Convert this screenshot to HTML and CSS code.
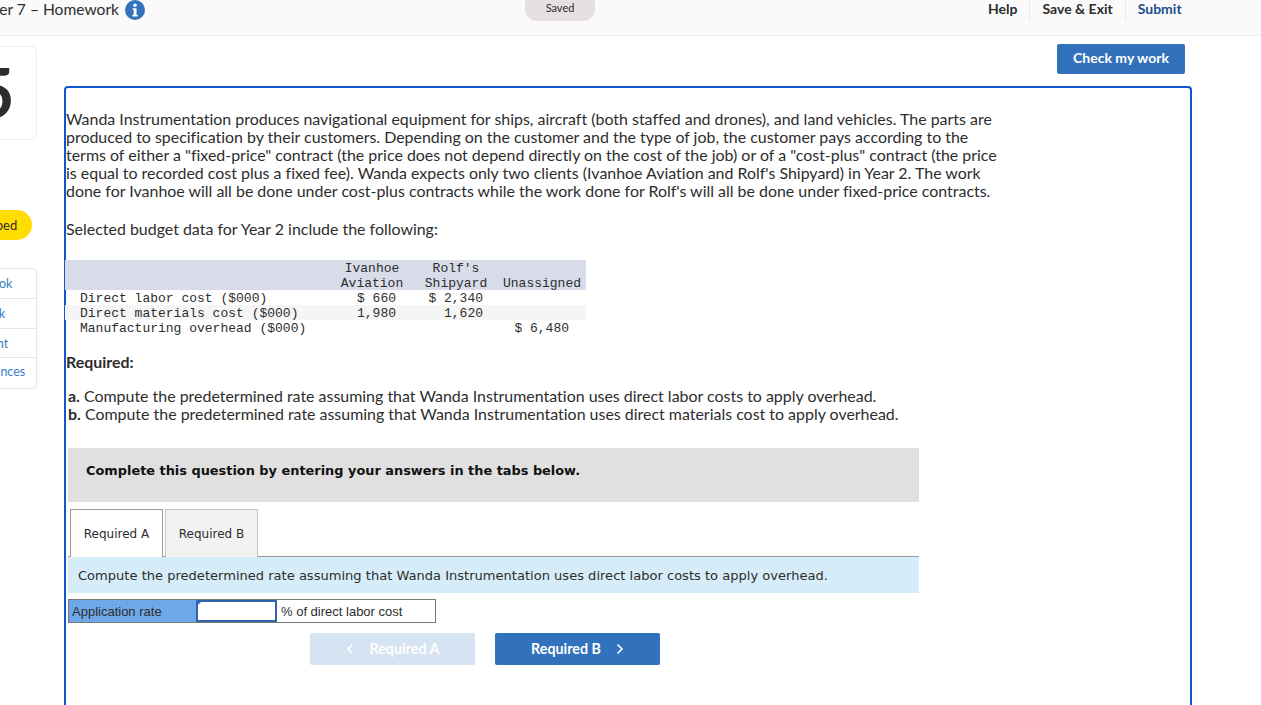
FILE: index.html
```html
<!DOCTYPE html>
<html lang="en">
<head>
<meta charset="utf-8">
<title>Chapter 7 – Homework</title>
<link rel="stylesheet" href="styles.css">
</head>
<body>
<div class="page">
  <header class="topbar">
    <div class="title-wrap">
      <span class="title">Chapter 7 – Homework</span>
      <svg class="info" width="20" height="20" viewBox="0 0 20 20"><circle cx="10" cy="10" r="10" fill="#3272bc"/><circle cx="10" cy="5.2" r="1.8" fill="#fff"/><path d="M7.6 8.2h3.9v6.6h1.2v1.6H7.4v-1.6h1.3v-5H7.6z" fill="#fff"/></svg>
    </div>
    <div class="saved">Saved</div>
    <nav class="actions">
      <a class="action">Help</a>
      <a class="action">Save &amp; Exit</a>
      <a class="action submit">Submit</a>
    </nav>
  </header>
  <div class="main">
    <aside class="side">
      <div class="qnum">5</div>
      <div class="skipped">Skipped</div>
      <ul class="links">
        <li>eBook</li>
        <li>Ask</li>
        <li>Print</li>
        <li>References</li>
      </ul>
    </aside>
    <div class="content">
      <div class="check-row"><button class="check">Check my work</button></div>
      <section class="question">
        <p class="para">Wanda Instrumentation produces navigational equipment for ships, aircraft (both staffed and drones), and land vehicles. The parts are<br>produced to specification by their customers. Depending on the customer and the type of job, the customer pays according to the<br>terms of either a "fixed-price" contract (the price does not depend directly on the cost of the job) or of a "cost-plus" contract (the price<br>is equal to recorded cost plus a fixed fee). Wanda expects only two clients (Ivanhoe Aviation and Rolf's Shipyard) in Year 2. The work<br>done for Ivanhoe will all be done under cost-plus contracts while the work done for Rolf's will all be done under fixed-price contracts.</p>
        <p class="para selected">Selected budget data for Year 2 include the following:</p>
        <table class="budget">
          <thead>
            <tr><th></th><th><span class="hd">Ivanhoe<br>Aviation</span></th><th><span class="hd">Rolf's<br>Shipyard</span></th><th><span class="hd">Unassigned</span></th></tr>
          </thead>
          <tbody>
            <tr><td>Direct labor cost ($000)</td><td>$ 660</td><td>$ 2,340</td><td></td></tr>
            <tr class="alt"><td>Direct materials cost ($000)</td><td>1,980</td><td>1,620</td><td></td></tr>
            <tr><td>Manufacturing overhead ($000)</td><td></td><td></td><td>$ 6,480</td></tr>
          </tbody>
        </table>
        <p class="para required">Required:</p>
        <ol class="parts">
          <li><b>a.</b> Compute the predetermined rate assuming that Wanda Instrumentation uses direct labor costs to apply overhead.</li>
          <li><b>b.</b> Compute the predetermined rate assuming that Wanda Instrumentation uses direct materials cost to apply overhead.</li>
        </ol>
        <div class="notice">Complete this question by entering your answers in the tabs below.</div>
        <div class="tabs">
          <div class="tab active">Required A</div>
          <div class="tab">Required B</div>
        </div>
        <div class="prompt">Compute the predetermined rate assuming that Wanda Instrumentation uses direct labor costs to apply overhead.</div>
        <div class="answer">
          <div class="answer-label">Application rate</div>
          <div class="answer-input"><input type="text" aria-label="Application rate"></div>
          <div class="answer-unit">% of direct labor cost</div>
        </div>
        <div class="nav">
          <button class="navbtn off"><svg width="8" height="12" viewBox="0 0 8 12"><path d="M6.5 1.5 2 6l4.5 4.5" fill="none" stroke="#fff" stroke-width="1.6"/></svg>Required A</button>
          <button class="navbtn"><span>Required B</span><svg width="8" height="12" viewBox="0 0 8 12"><path d="M1.5 1.5 6 6l-4.5 4.5" fill="none" stroke="#fff" stroke-width="1.6"/></svg></button>
        </div>
      </section>
    </div>
  </div>
</div>
</body>
</html>
```
FILE: styles.css
```css
html, body {
  margin: 0;
  height: 705px;
  overflow: hidden;
  background: #fff;
}
body {
  font-family: "Lato", "Liberation Sans", sans-serif;
  color: #2d2d2d;
  font-variant-ligatures: none;
}
.page {
  margin-left: -60px;
  width: 1321px;
}
.topbar {
  height: 35px;
  border-bottom: 1px solid #eeeeee;
  background: #fafafa;
  display: flex;
  align-items: flex-start;
}
.title-wrap {
  width: 575px;
  display: flex;
  justify-content: flex-end;
  padding-right: 380px;
  box-sizing: content-box;
  margin-left: -370px;
  align-items: center;
  height: 19px;
  gap: 6px;
}
.title {
  font-size: 15.6px;
  white-space: nowrap;
  padding-bottom: 2px;
}
.info { flex: none; }
.saved {
  width: 70px;
  height: 21px;
  background: #e6e0e3;
  border-radius: 0 0 12px 12px;
  font-size: 11px;
  line-height: 16px;
  text-align: center;
}
.actions {
  display: flex;
  margin-left: 381px;
}
.action {
  font-size: 14px;
  font-weight: 700;
  height: 20px;
  line-height: 18px;
  padding: 0 12px;
  border-right: 1px solid #e8e8e8;
}
.action.submit {
  border-right: 0;
  color: #1c4f8c;
}
.main {
  display: flex;
  gap: 27px;
}
.side {
  width: 97px;
  padding-top: 10px;
  display: flex;
  flex-direction: column;
  align-items: flex-end;
}
.qnum {
  width: 84px;
  height: 94px;
  box-sizing: border-box;
  border: 1px solid #eeeeee;
  border-radius: 5px;
  font-size: 68px;
  font-weight: 700;
  line-height: 90px;
  text-align: center;
}
.skipped {
  margin-top: 70px;
  margin-right: 5px;
  width: 75px;
  height: 30px;
  border-radius: 15px;
  background: #ffdd00;
  font-size: 13px;
  line-height: 30px;
  text-align: center;
}
.links {
  list-style: none;
  margin: 28px 0 0;
  padding: 0;
  width: 84px;
  border: 1px solid #e6e6e6;
  border-radius: 4px;
  box-sizing: border-box;
  color: #3a7cc4;
  font-size: 12.5px;
  text-align: center;
}
.links li {
  height: 29.75px;
  line-height: 30px;
  border-bottom: 1px solid #e6e6e6;
  box-sizing: border-box;
}
.links li:last-child {
  border-bottom: 0;
  line-height: 28px;
}
.content {
  width: 1128px;
}
.check-row {
  display: flex;
  justify-content: flex-end;
  padding: 8px 7px 12px 0;
}
.check {
  width: 128px;
  height: 30px;
  border: 0;
  border-radius: 2px;
  background: #3272bc;
  color: #fff;
  font: 700 14px "Lato", "Liberation Sans", sans-serif;
  padding: 0 0 3px;
}
.question {
  border: 2px solid #0f56cc;
  border-bottom: 0;
  border-radius: 4px 4px 0 0;
  height: 640px;
  padding-top: 22px;
  box-sizing: border-box;
}
.para {
  margin: 0;
  font-size: 15.95px;
  line-height: 18px;
}
.selected { margin-top: 20px; }
.budget {
  margin: 22px 0 0 -1px;
  width: 521px;
  border-collapse: collapse;
  table-layout: fixed;
  font: 13px/15px "Liberation Mono", monospace;
}
.budget th {
  background: #d7dce8;
  font-weight: 400;
  padding: 0;
  vertical-align: bottom;
  text-align: center;
  height: 30px;
}
.hd {
  display: block;
  margin: 1px 0 -1px;
}
.budget th:nth-child(1) { width: 265px; }
.budget th:nth-child(2) { width: 84px; }
.budget th:nth-child(3) { width: 84px; }
.budget td {
  padding: 2px 0 0;
  height: 13px;
  line-height: 13px;
  text-align: right;
  white-space: pre;
  box-sizing: content-box;
}
.budget td:nth-child(1) { text-align: left; padding-left: 15px; }
.budget td:nth-child(2) { padding-right: 18px; }
.budget td:nth-child(3) { padding-right: 15px; }
.budget td:nth-child(4) { padding-right: 17px; }
.budget .alt td { background: #f5f5f5; }
.required {
  margin-top: 18px;
  font-weight: 700;
}
.parts {
  list-style: none;
  margin: 16px 0 0 2px;
  padding: 0;
  font-size: 15.95px;
  line-height: 18px;
}
.notice {
  margin: 25px 0 0 2px;
  width: 851px;
  height: 54px;
  box-sizing: border-box;
  background: #e0e0e0;
  padding-left: 18px;
  color: #111;
  font: 700 12.9px/45px "DejaVu Sans", sans-serif;
}
.tabs {
  margin: 7px 0 0 2px;
  width: 851px;
  height: 48px;
  box-sizing: border-box;
  border-bottom: 1px solid #999;
  padding-left: 2px;
  display: flex;
  gap: 2px;
}
.tab {
  width: 93px;
  height: 48px;
  box-sizing: border-box;
  border: 1px solid #c6c6c6;
  border-bottom: 0;
  background: #f2f2f2;
  font: 12px/49px "DejaVu Sans", sans-serif;
  text-align: center;
}
.tab.active {
  background: #fff;
  border-color: #999;
}
.prompt {
  margin-left: 2px;
  width: 851px;
  height: 36px;
  box-sizing: border-box;
  background: #d6edf9;
  padding-left: 10px;
  font: 13.05px/37px "DejaVu Sans", sans-serif;
}
.answer {
  margin: 6px 0 0 2px;
  display: flex;
  height: 24px;
  font: 13px/24px "Liberation Sans", sans-serif;
}
.answer-label {
  width: 128px;
  box-sizing: border-box;
  border: 1px solid #777;
  border-right: 0;
  background: #6fa8e8;
  padding-left: 3px;
  line-height: 23px;
}
.answer-input {
  position: relative;
  width: 81px;
  box-sizing: border-box;
  border: 1px solid #777;
  border-width: 1px 0;
}
.answer-input::before {
  content: "";
  position: absolute;
  left: 1px;
  top: 1px;
  border-left: 5px solid #2f6fc4;
  border-bottom: 5px solid transparent;
}
.answer-input input {
  display: block;
  width: 100%;
  height: 100%;
  box-sizing: border-box;
  border: 2px solid #2f65a8;
  background: #fff;
  padding: 0;
  margin: 0;
}
.answer-unit {
  width: 159px;
  box-sizing: border-box;
  border: 1px solid #777;
  border-left: 0;
  padding-left: 4px;
  line-height: 23px;
}
.nav {
  margin: 10px 0 0 244px;
  display: flex;
  gap: 20px;
}
.navbtn {
  width: 165px;
  height: 32px;
  border: 0;
  border-radius: 2px;
  background: #3272bc;
  color: #fff;
  font: 700 14.3px "Lato", "Liberation Sans", sans-serif;
  display: flex;
  align-items: center;
  justify-content: center;
  gap: 15px;
  padding: 0 0 1px;
}
.navbtn.off { background: #d6e3f2; gap: 16px; }
```
